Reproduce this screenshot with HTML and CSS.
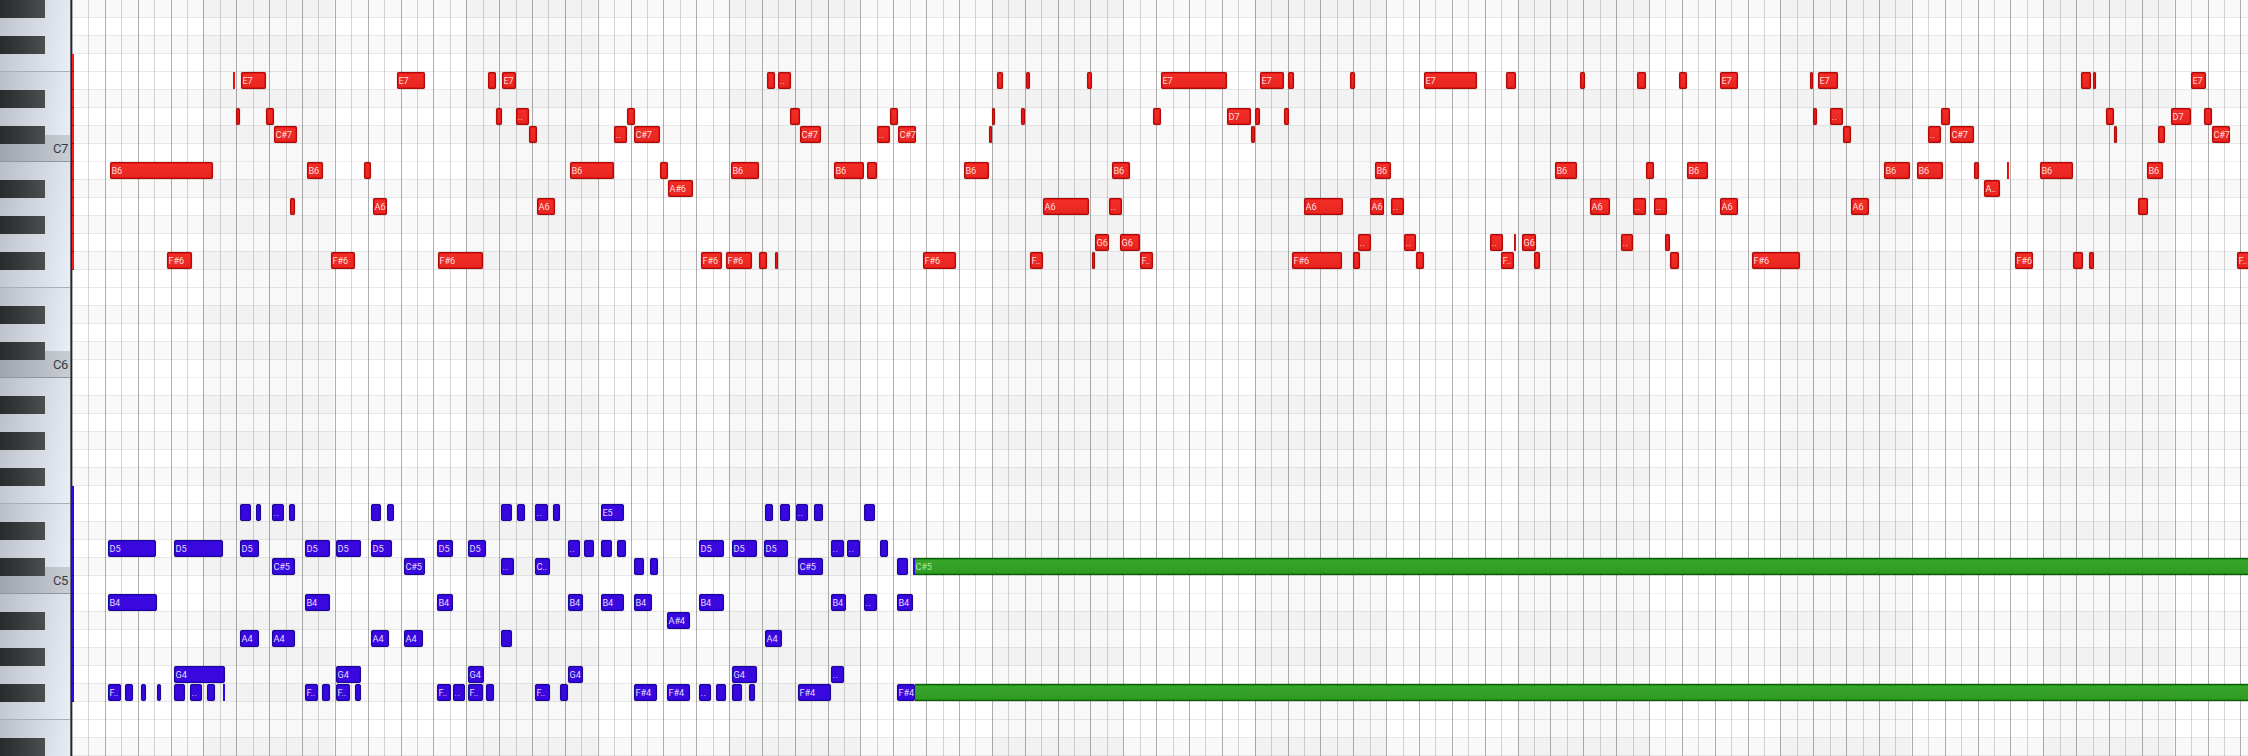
FILE: index.html
```html
<!DOCTYPE html>
<html lang="en">
<head>
<meta charset="utf-8">
<title>Piano roll</title>
<link rel="stylesheet" href="styles.css">
</head>
<body>
<main class="roll">
  <aside class="keyboard" id="keyboard"></aside>
  <section class="grid" id="grid"></section>
</main>
<script src="roll.js"></script>
</body>
</html>
```

FILE: styles.css
```css
body {
  margin: 0;
  overflow: hidden;
  font-family: Roboto, "Liberation Sans", sans-serif;
}

.roll {
  position: relative;
  display: flex;
  width: 2248px;
  height: 756px;
  overflow: hidden;
  background: #fff;
}

.keyboard {
  position: relative;
  box-sizing: border-box;
  flex: none;
  width: 72px;
  height: 756px;
  overflow: hidden;
  border-right: 1px solid #23272d;
  background: #626a75;
}

.key {
  position: absolute;
  left: 0;
  width: 70px;
  box-sizing: border-box;
  border-bottom: 1px solid #a9aeb8;
  background: linear-gradient(98deg, #b9bdc6 0%, #ccd1d9 35%, #dce1ea 72%, #e9eef7 100%);
}

.key-c {
  border-bottom-color: #91969e;
  background: linear-gradient(90deg, #a0a4ac, #b4b9c1 50%, #c9ced5);
  color: #373b42;
  font-size: 13px;
  line-height: 28px;
  letter-spacing: -0.4px;
  text-align: right;
  padding-right: 2px;
}

.key-black {
  position: absolute;
  left: 0;
  width: 45px;
  height: 18px;
  background: linear-gradient(90deg, #292a2b, #3a3b3c 50%, #4d4e4f);
}

.grid {
  position: relative;
  flex: none;
  width: 2176px;
  height: 756px;
}

.lane {
  position: absolute;
  left: 0;
  width: 100%;
  height: 18px;
  box-sizing: border-box;
  border-bottom: 1px solid #e8e8e8;
}

.lane-dark { background: #f9f9f9; }
.lane-octave { border-bottom-color: #f2f2f2; }

.bar {
  position: absolute;
  top: 0;
  height: 100%;
  background: rgba(0, 0, 0, 0.027);
}

.line {
  position: absolute;
  top: 0;
  width: 1px;
  height: 100%;
  background: rgba(0, 0, 0, 0.16);
}

.line-beat { background: rgba(0, 0, 0, 0.31); }

.note {
  position: absolute;
  box-sizing: border-box;
  height: 17px;
  border: 1px solid;
  border-radius: 2px;
  padding-left: 0.6px;
  font-size: 9.2px;
  line-height: 16px;
  letter-spacing: -0.2px;
  white-space: nowrap;
}

.note-dots { letter-spacing: 0.4px; }

.note-sliver {
  border-width: 0;
  border-radius: 0;
  padding: 0;
}

.red {
  color: #ffdedb;
  border-color: #a80d0b #b40b09;
  background: linear-gradient(rgba(247, 46, 41, 0.96), rgba(232, 39, 34, 0.97)) padding-box, #a80d0b;
  box-shadow: inset 0 0 0 1px rgba(220, 0, 0, 0.5), 0 0 1px rgba(60, 0, 0, 0.5);
}

.blue {
  color: #e0d8ff;
  border-color: #1c0799;
  background: #3908de;
  box-shadow: inset 0 0 0 1px rgba(35, 0, 215, 0.5), 0 0 1px rgba(60, 0, 0, 0.5);
}

.green {
  color: #a2ec95;
  border-color: #0b5d04;
  border-left-width: 0;
  border-radius: 0;
  background: linear-gradient(rgba(50, 163, 37, 0.97), rgba(42, 151, 29, 0.97));
  box-shadow: inset 0 1px rgba(0, 130, 0, 0.5), inset 0 -1px rgba(0, 130, 0, 0.5), 0 0 1px rgba(0, 0, 0, 0.5);
}

.note-sliver.red { background: #f01411; box-shadow: inset 1px 0 #ce100e; }
.note-sliver.blue { background: #3107e8; box-shadow: none; }

.ghost {
  position: absolute;
  left: 0;
  width: 2px;
  height: 18px;
  box-sizing: border-box;
  border-bottom: 1px solid;
}

.ghost-red { background: #ff1a1a; border-color: #9d0808; }
.ghost-blue { background: #3207ee; border-color: #1a0687; }
```

FILE: roll.js
```
const ROW = 18;
const ROWS = 42;
const ORIGIN = 72;
const WIDTH = 2248;
const BEAT = 32.855;

const grid = document.getElementById('grid');
const keyboard = document.getElementById('keyboard');

function add(parent, className, box, text) {
  const el = document.createElement('div');
  el.className = className;
  for (const side in box) el.style[side] = box[side] + 'px';
  if (text) el.textContent = text;
  parent.appendChild(el);
}

/* Row 9 is B6; offsets inside an octave count downwards from B. */
const offset = row => (row + 3) % 12;
const isBlack = row => [1, 3, 5, 8, 10].includes(offset(row));

/* Keyboard: B-F block, E-D block and a C key in each octave */
for (let top = -54; top < 756; top += 216) {
  add(keyboard, 'key', { top: top, height: 126 });
  add(keyboard, 'key', { top: top + 126, height: 64 });
  if (top + 189 < 740) {
    add(keyboard, 'key key-c', { top: top + 189, height: 27 },
      'C' + (7 - (top + 54) / 216));
  }
}
for (let row = 0; row < ROWS; row++) {
  if (isBlack(row)) add(keyboard, 'key-black', { top: row * ROW });
}

/* Lanes, bars and beat lines */
for (let row = 0; row < ROWS; row++) {
  const kind = isBlack(row) ? ' lane-dark' : offset(row) === 11 ? ' lane-octave' : '';
  add(grid, 'lane' + kind, { top: row * ROW });
}
const beatX = n => Math.floor(105.32 + BEAT * n) - ORIGIN;
for (let n = 3; n < 66; n += 8) {
  add(grid, 'bar', { left: beatX(n), width: Math.floor(BEAT * 4) });
}
for (let n = -1; n < 66; n++) {
  add(grid, 'line line-beat', { left: beatX(n) });
  if (beatX(n + 0.5) + ORIGIN < WIDTH) add(grid, 'line', { left: beatX(n + 0.5) });
}

/* Notes as "start-end[:label]" lists keyed by row */
const tracks = {
  red: {
    4: '233-235 241-266:E7 397-425:E7 488-496 502-516:E7 767-775 778-791:.. 997-1003 1026-1030 1087-1092 1161-1227:E7 1260-1284:E7 1288-1294 1350-1355 1424-1477:E7 1506-1516 1580-1585 1637-1646 1679-1687 1720-1738:E7 1810-1813 1818-1838:E7 2081-2091 2093-2096 2191-2206:E7',
    6: '236-240 266-274 496-502 516-529:.. 627-635 790-800 890-898 992-995 1021-1025 1153-1161 1227-1251:D7 1255-1260 1284-1289 1813-1817 1830-1843:.. 1941-1950 2106-2114 2171-2191:D7 2204-2212',
    7: '274-297:C#7 529-537 614-627:.. 634-660:C#7 800-821:C#7 877-890:.. 898-916:C#7 989-992 1251-1255 1843-1851 1928-1941:.. 1950-1974:C#7 2114-2117 2158-2165 2212-2230:C#7',
    9: '110-213:B6 307-323:B6 364-371 570-614:B6 660-668 731-759:B6 834-864:B6 867-877 964-989:B6 1112-1130:B6 1375-1391:B6 1555-1577:B6 1646-1654 1687-1708:B6 1884-1910:B6 1917-1943:B6 1974-1979 2007-2009 2040-2073:B6 2147-2163:B6',
    10: '668-693:A#6 1984-2000:A..',
    11: '290-295 373-387:A6 537-555:A6 1043-1089:A6 1109-1122:.. 1304-1343:A6 1370-1384:A6 1391-1404:.. 1590-1610:A6 1633-1646:.. 1654-1667:.. 1720-1738:A6 1851-1869:A6 2138-2148',
    13: '1095-1109:G6 1120-1140:G6 1358-1371:.. 1404-1416:.. 1490-1503:.. 1514-1516 1522-1536:G6 1621-1633:.. 1665-1670',
    14: '167-192:F#6 331-355:F#6 438-483:F#6 701-722:F#6 726-752:F#6 759-767 775-778 923-956:F#6 1030-1043:F.. 1092-1095 1140-1153:F.. 1292-1342:F#6 1353-1360 1416-1424 1501-1514:F.. 1534-1540 1670-1679 1752-1800:F#6 2015-2033:F#6 2073-2083 2089-2094 2237-2260:F..'
  },
  green: {
    31: '915-2260:C#5',
    38: '915-2260'
  },
  blue: {
    28: '240-251 256-261 272-284:.. 289-295 371-381 387-394 501-512 517-525 535-548:.. 553-560 601-624:E5 765-773 780-790 796-808:.. 814-823 864-875',
    30: '108-156:D5 174-223:D5 240-259:D5 305-330:D5 336-361:D5 371-392:D5 437-453:D5 468-486:D5 568-580:.. 584-594 601-612 617-626 699-724:D5 732-757:D5 764-788:D5 831-844:.. 847-860:.. 880-888',
    31: '272-295:C#5 404-425:C#5 501-514:.. 535-550:C.. 634-644 650-658 798-823:C#5 897-908 913-915',
    33: '108-157:B4 305-330:B4 437-453:B4 568-583:B4 601-624:B4 634-652:B4 699-724:B4 831-846:B4 864-877:.. 897-913:B4',
    34: '667-690:A#4',
    35: '240-259:A4 272-295:A4 371-389:A4 404-423:A4 501-512 765-782:A4',
    37: '174-225:G4 336-361:G4 468-484:G4 568-583:G4 732-757:G4 831-844:..',
    38: '108-121:F.. 125-133 141-146 157-161 174-185 190-202:.. 207-215 223-225 305-318:F.. 322-330 336-350:F.. 355-361 437-451:F.. 453-465:.. 468-483:F.. 486-494 535-550:F.. 560-568 634-657:F#4 667-690:F#4 699-711:.. 716-726 732-742 749-755 798-831:F#4 897-915:F#4'
  }
};

for (const color in tracks) {
  for (const row in tracks[color]) {
    for (const item of tracks[color][row].split(' ')) {
      const [span, label] = item.split(':');
      const [start, end] = span.split('-').map(Number);
      const variant = end - start < 3 ? ' note-sliver' : label === '..' ? ' note-dots' : '';
      add(grid, 'note ' + color + variant,
        { left: start - ORIGIN, top: row * ROW, width: end - start }, label);
    }
  }
}

/* Range markers beside the keyboard */
for (let i = 0; i < 12; i++) {
  add(grid, 'ghost ghost-red', { top: (3 + i) * ROW });
  add(grid, 'ghost ghost-blue', { top: (27 + i) * ROW });
}
```
